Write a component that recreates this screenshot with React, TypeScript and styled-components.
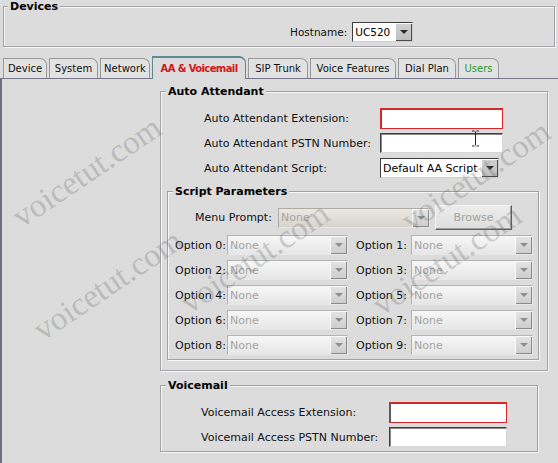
import React from 'react';
import styled, { createGlobalStyle, css } from 'styled-components';

const GlobalStyle = createGlobalStyle`
  html, body {
    margin: 0;
    padding: 0;
    background: #dcdcdc;
  }
  body {
    font-family: "DejaVu Sans", Verdana, sans-serif;
    font-size: 11px;
    color: #111;
  }
`;

const Page = styled.div`
  position: relative;
  width: 558px;
  height: 463px;
  overflow: hidden;
  background: #dcdcdc;
`;

const Group = styled.fieldset<{ $w?: number }>`
  margin: 0;
  padding: 0;
  min-width: 0;
  box-sizing: border-box;
  border: 1px solid #a2a2a6;
  box-shadow: inset 1px 1px 0 #f6f6f6, 1px 1px 0 #f6f6f6;
  ${(p) => p.$w && `width: ${p.$w}px;`}
`;

const Legend = styled.legend<{ $indent?: number }>`
  margin-left: ${(p) => p.$indent ?? 5}px;
  padding: 0 2px;
  font-size: 11px;
  line-height: 13px;
  font-weight: bold;
  color: #000;
  background: #dcdcdc;
`;

const DevicesGroup = styled(Group)`
  margin: 0 3px;
`;

const HostRow = styled.div`
  display: flex;
  align-items: center;
  gap: 5px;
  padding: 9px 0 4px 286px;
  font-size: 10.5px;
`;

const TabBar = styled.div`
  display: flex;
  align-items: flex-end;
  gap: 2px;
  height: 22px;
  margin-top: 9px;
  padding-left: 3px;
  border-bottom: 1px solid #76768a;
`;

const Tab = styled.div<{ $w: number; $active?: boolean; $color?: string }>`
  display: flex;
  align-items: center;
  justify-content: center;
  box-sizing: border-box;
  width: ${(p) => p.$w}px;
  height: 20px;
  font-size: 10px;
  color: ${(p) => p.$color ?? '#111'};
  background: #e2e2e2;
  border: 1px solid #9a9a9e;
  border-bottom: none;
  border-top-right-radius: 7px;
  white-space: nowrap;
  ${(p) =>
    p.$active &&
    css`
      height: 23px;
      margin-bottom: -1px;
      background: #dcdcdc;
      border-color: #5d8b95;
      border-top-width: 2px;
      font-weight: bold;
      letter-spacing: -0.6px;
      padding-bottom: 1px;
    `}
`;

const Content = styled.div`
  display: flex;
  height: 384px;
  padding: 6px 0 0 158px;
  border-left: 2px solid #6e6e80;
`;

const Column = styled.div`
  display: flex;
  flex-direction: column;
  align-items: flex-start;
  gap: 8px;
`;

const FormGrid = styled.div<{ $label: number; $field: number; $left: number; $bottom: number }>`
  display: grid;
  grid-template-columns: ${(p) => p.$label}px ${(p) => p.$field}px;
  grid-auto-rows: 20px;
  row-gap: 5px;
  align-items: center;
  padding: 10px 0 ${(p) => p.$bottom}px ${(p) => p.$left}px;
`;

const Label = styled.span`
  white-space: nowrap;
  color: #111;
`;

const TextBox = styled.input<{ $error?: boolean }>`
  box-sizing: border-box;
  width: 100%;
  height: 20px;
  margin: 0;
  padding: 0 2px;
  font: inherit;
  background: #fff;
  border: 1px solid;
  border-color: #3e3e3e #d6d6d6 #d6d6d6 #3e3e3e;
  box-shadow: inset 1px 1px 0 #8a8a8a;
  outline: none;
  ${(p) =>
    p.$error &&
    css`
      height: 21px;
      border-color: #d8262c;
      box-shadow: inset 1px 1px 0 #5a5a5a;
    `}
`;

type SelectTone = 'plain' | 'disabled' | 'menu';

const SelectBox = styled.div<{ $w?: number; $tone: SelectTone }>`
  display: flex;
  box-sizing: border-box;
  width: ${(p) => (p.$w ? `${p.$w}px` : '100%')};
  height: 20px;
  border: 1px solid;
  ${(p) =>
    p.$tone === 'plain' &&
    css`
      background: #fff;
      border-color: #3e3e3e #cfcfcf #cfcfcf #3e3e3e;
      color: #000;
    `}
  ${(p) =>
    p.$tone === 'disabled' &&
    css`
      background: linear-gradient(#f7f7f7, #e6e6e6);
      border-color: #b2b2b2 #e8e8e8 #e8e8e8 #b2b2b2;
      color: #a4a4a4;
    `}
  ${(p) =>
    p.$tone === 'menu' &&
    css`
      background: linear-gradient(#ebe8e4, #d7d3cd);
      border-color: #aeaaa4 #e8e6e2 #e8e6e2 #aeaaa4;
      color: #a4a4a4;
    `}
`;

const SelectValue = styled.span`
  flex: 1;
  display: flex;
  align-items: center;
  padding-left: 2px;
  overflow: hidden;
  white-space: nowrap;
`;

const ArrowButton = styled.span<{ $dark?: boolean }>`
  display: flex;
  align-items: center;
  justify-content: center;
  width: 17px;
  background: ${(p) => (p.$dark ? 'linear-gradient(#d2d2d2, #bdbdbd)' : 'linear-gradient(#e4e4e4, #cdcdcd)')};
  box-shadow: inset 1px 1px 0 #fafafa, inset -1px -1px 0 ${(p) => (p.$dark ? '#4a4a4a' : '#8a8a8a')};
  &::after {
    content: '';
    border-left: 4px solid transparent;
    border-right: 4px solid transparent;
    border-top: 4px solid ${(p) => (p.$dark ? '#2c2c2c' : '#8e8e8e')};
  }
`;

const Select: React.FC<{ value: string; tone: SelectTone; w?: number }> = ({ value, tone, w }) => (
  <SelectBox $tone={tone} $w={w}>
    <SelectValue>{value}</SelectValue>
    <ArrowButton $dark={tone === 'plain'} />
  </SelectBox>
);

const ParamsGroup = styled(Group)`
  margin: 7px 0 10px 6px;
`;

const MenuRow = styled.div`
  display: flex;
  align-items: center;
  height: 25px;
  padding: 7px 0 0 27px;
`;

const MenuLabel = styled(Label)`
  width: 83px;
`;

const BrowseButton = styled.button`
  box-sizing: border-box;
  width: 77px;
  height: 25px;
  margin-left: 5px;
  padding: 0;
  font: inherit;
  color: #a2a2a2;
  background: linear-gradient(#ececec, #dedede);
  border: 1px solid;
  border-color: #f4f4f4 #5e5e5e #5e5e5e #f4f4f4;
  box-shadow: inset -1px -1px 0 #a0a0a0;
`;

const OptionGrid = styled.div`
  display: grid;
  grid-template-columns: 173px 177px;
  grid-auto-rows: 20px;
  column-gap: 8px;
  row-gap: 5px;
  padding: 5px 0 4px 7px;
`;

const OptionCell = styled.div<{ $label: number }>`
  display: grid;
  grid-template-columns: ${(p) => p.$label}px 1fr;
  align-items: center;
`;

const Watermark = styled.span<{ $x: number; $y: number }>`
  position: absolute;
  left: ${(p) => p.$x}px;
  top: ${(p) => p.$y}px;
  transform: translate(-50%, -50%) rotate(-34deg);
  font-family: "Liberation Serif", "Times New Roman", serif;
  font-size: 33px;
  color: rgba(105, 105, 105, 0.3);
  white-space: nowrap;
  pointer-events: none;
`;

const Cursor = styled.svg`
  position: absolute;
  left: 471px;
  top: 130px;
`;

const tabs = [
  { label: 'Device', w: 44 },
  { label: 'System', w: 49 },
  { label: 'Network', w: 50 },
  { label: 'AA & Voicemail', w: 94, active: true, color: '#d4141c' },
  { label: 'SIP Trunk', w: 60 },
  { label: 'Voice Features', w: 86 },
  { label: 'Dial Plan', w: 58 },
  { label: 'Users', w: 41, color: '#2a9a2a' },
];

const marks = [
  { x: 87, y: 172 },
  { x: 108, y: 285 },
  { x: 255, y: 258 },
  { x: 476, y: 176 },
  { x: 447, y: 260 },
];

export default function App() {
  return (
    <Page>
      <GlobalStyle />
      <DevicesGroup>
        <Legend $indent={4}>Devices</Legend>
        <HostRow>
          <Label>Hostname:</Label>
          <Select value="UC520" tone="plain" w={61} />
        </HostRow>
      </DevicesGroup>

      <TabBar>
        {tabs.map((t) => (
          <Tab key={t.label} $w={t.w} $active={t.active} $color={t.color}>
            {t.label}
          </Tab>
        ))}
      </TabBar>

      <Content>
        <Column>
          <Group $w={388}>
            <Legend>Auto Attendant</Legend>
            <FormGrid $label={176} $field={123} $left={43} $bottom={0}>
              <Label>Auto Attendant Extension:</Label>
              <TextBox $error readOnly />
              <Label>Auto Attendant PSTN Number:</Label>
              <TextBox readOnly />
              <Label>Auto Attendant Script:</Label>
              <Select value="Default AA Script" tone="plain" w={119} />
            </FormGrid>
            <ParamsGroup $w={372}>
              <Legend>Script Parameters</Legend>
              <MenuRow>
                <MenuLabel>Menu Prompt:</MenuLabel>
                <Select value="None" tone="menu" w={152} />
                <BrowseButton disabled>Browse</BrowseButton>
              </MenuRow>
              <OptionGrid>
                {Array.from({ length: 10 }, (_, i) => (
                  <OptionCell key={i} $label={i % 2 === 0 ? 52 : 55}>
                    <Label>Option {i}:</Label>
                    <Select value="None" tone="disabled" />
                  </OptionCell>
                ))}
              </OptionGrid>
            </ParamsGroup>
          </Group>

          <Group $w={378}>
            <Legend>Voicemail</Legend>
            <FormGrid $label={188} $field={118} $left={40} $bottom={4}>
              <Label>Voicemail Access Extension:</Label>
              <TextBox $error readOnly />
              <Label>Voicemail Access PSTN Number:</Label>
              <TextBox readOnly />
            </FormGrid>
          </Group>
        </Column>
      </Content>

      {marks.map((m, i) => (
        <Watermark key={i} $x={m.x} $y={m.y}>
          voicetut.com
        </Watermark>
      ))}

      <Cursor width="9" height="17" viewBox="0 0 9 17">
        <path d="M1 1h2.5M5.5 1H8M4.5 1.5v14M1 16h2.5M5.5 16H8" stroke="#222" strokeWidth="1" fill="none" />
      </Cursor>
    </Page>
  );
}
